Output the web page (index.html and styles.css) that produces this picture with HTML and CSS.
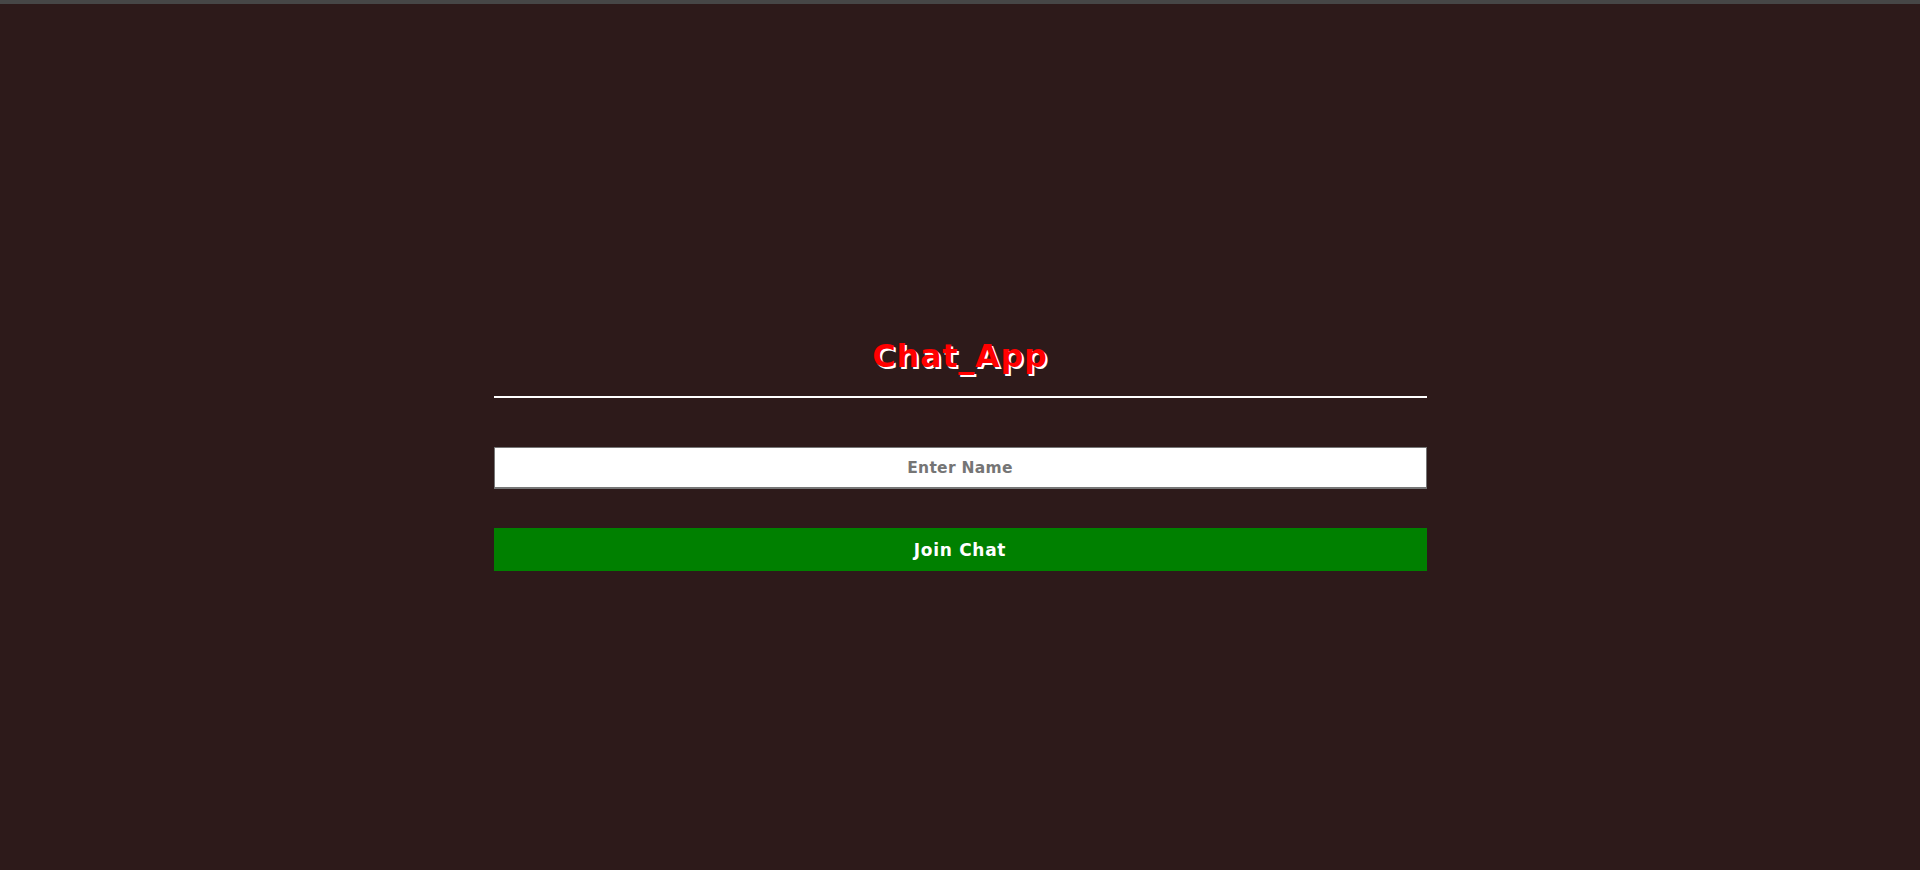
FILE: index.html
```html
<!DOCTYPE html>
<html>
<head>
<meta charset="utf-8">
<link rel="stylesheet" href="styles.css">
</head>
<body>
<div class="topbar"></div>
<main class="wrap">
  <h1 class="title">Chat_App</h1>
  <div class="rule"></div>
  <input class="name" type="text" placeholder="Enter Name">
  <button class="join">Join Chat</button>
</main>
</body>
</html>
```
FILE: styles.css
```css
html, body {
  margin: 0;
  padding: 0;
  background: #2d1a1a;
  height: 100%;
}
body {
  font-family: "DejaVu Sans", Verdana, sans-serif;
}
.topbar {
  height: 4px;
  background: #464646;
}
.wrap {
  width: 933px;
  margin: 0 auto;
  padding-top: 332px;
  display: flex;
  flex-direction: column;
}
.title {
  margin: 0;
  height: 40px;
  line-height: 40px;
  font-size: 32px;
  font-weight: bold;
  letter-spacing: 0.7px;
  color: #ff0000;
  text-align: center;
  text-shadow: 2px 2px 0 #ffffff;
}
.rule {
  margin-top: 20px;
  height: 2px;
  background: #ffffff;
}
.name {
  margin-top: 49px;
  height: 42px;
  box-sizing: border-box;
  border: 1px solid #767676;
  border-bottom-width: 2px;
  background: #ffffff;
  text-align: center;
  font-family: "DejaVu Sans", Verdana, sans-serif;
  font-weight: bold;
  font-size: 15.5px;
  letter-spacing: 0.3px;
  padding: 0;
  outline: none;
}
.name::placeholder {
  color: #757575;
}
.join {
  margin-top: 39px;
  height: 43px;
  border: none;
  background: #008000;
  color: #ffffff;
  font-family: "DejaVu Sans", Verdana, sans-serif;
  font-weight: bold;
  font-size: 17px;
  letter-spacing: 0.7px;
  padding: 0;
}
```
